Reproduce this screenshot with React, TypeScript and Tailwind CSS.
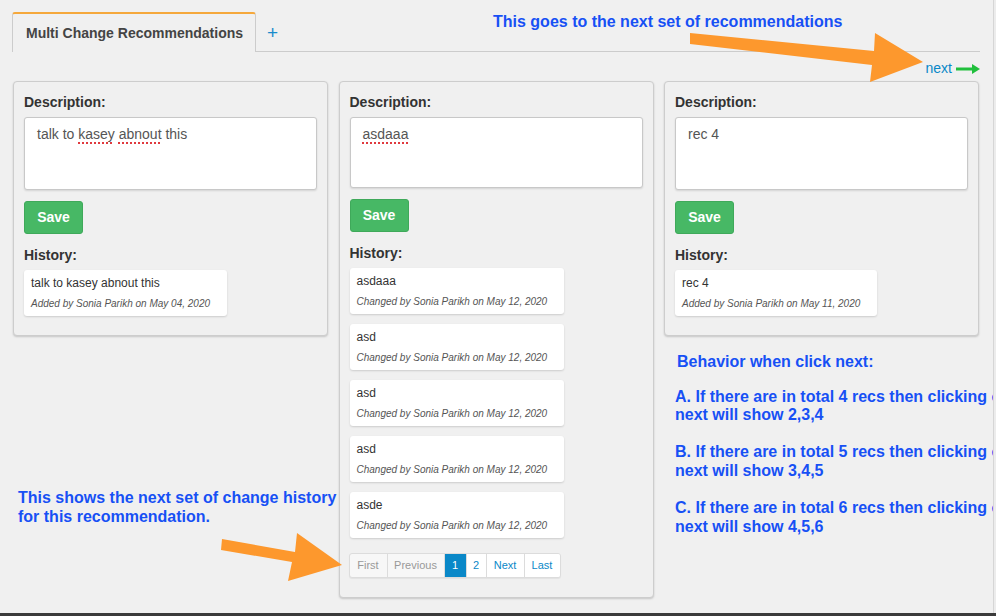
import * as React from "react";

interface Segment {
    text: string;
    typo?: boolean;
}

interface HistoryItem {
    text: string;
    meta: string;
}

interface Recommendation {
    description: Array<Segment>;
    boxHeight: string;
    history: Array<HistoryItem>;
    paged?: boolean;
}

const changed = (text: string): HistoryItem => ({ text, meta: "Changed by Sonia Parikh on May 12, 2020" });

const recs: Array<Recommendation> = [
    {
        description: [{ text: "talk to " }, { text: "kasey", typo: true }, { text: " " }, { text: "abnout", typo: true }, { text: " this" }],
        boxHeight: "h-[73px]",
        history: [{ text: "talk to kasey abnout this", meta: "Added by Sonia Parikh on May 04, 2020" }]
    },
    {
        description: [{ text: "asdaaa", typo: true }],
        boxHeight: "h-[71px]",
        history: [changed("asdaaa"), changed("asd"), changed("asd"), changed("asd"), changed("asde")],
        paged: true
    },
    {
        description: [{ text: "rec 4" }],
        boxHeight: "h-[73px]",
        history: [{ text: "rec 4", meta: "Added by Sonia Parikh on May 11, 2020" }]
    }
];

const pages = [
    { label: "First", w: "w-[37px]", tone: "text-[#999]" },
    { label: "Previous", w: "w-[57px]", tone: "text-[#999]" },
    { label: "1", w: "w-[22px]", tone: "text-white bg-[#0a88c8]" },
    { label: "2", w: "w-[20px]", tone: "text-[#0a88c8] bg-white" },
    { label: "Next", w: "w-[38px]", tone: "text-[#0a88c8] bg-white" },
    { label: "Last", w: "w-[36px]", tone: "text-[#0a88c8] bg-white" }
];

const Pagination = () => (
    <div className="mt-[15px] -ml-[1px] flex h-[25px] w-fit overflow-hidden rounded-[3px] border border-[#dcdcdc] bg-[#f7f7f7] shadow-[0_1px_1px_rgba(0,0,0,0.06)]">
        {pages.map((p, i) => (
            <div
                key={p.label}
                className={`${p.w} ${p.tone} ${i > 0 ? "border-l border-[#dcdcdc]" : ""} flex items-center justify-center text-[11px]`}
            >
                {p.label}
            </div>
        ))}
    </div>
);

const RecCard = ({ rec }: { rec: Recommendation }) => (
    <div className="w-[315px] rounded-[4px] border border-[#cdcdcd] bg-[#f0f0f0] px-[10px] pt-[10px] pb-[19px] shadow-[0_1px_2px_rgba(0,0,0,0.18)]">
        <div className="mb-[5px] text-[14px] font-bold leading-[20px] text-[#333]">Description:</div>
        <div
            className={`${rec.boxHeight} rounded-[3px] border border-[#c8c8c8] bg-white px-[12px] pt-[6px] text-[14px] leading-[20px] text-[#555] shadow-[0_1px_2px_rgba(0,0,0,0.12)]`}
        >
            {rec.description.map((s, i) => (
                <span
                    key={i}
                    className={s.typo ? "underline decoration-dotted decoration-[#e0393e] decoration-[1.5px] underline-offset-[3px]" : ""}
                >
                    {s.text}
                </span>
            ))}
        </div>
        <button className="mt-[11px] h-[33px] w-[59px] rounded-[3px] border border-[#3fa95a] bg-[#47b865] text-[14px] font-bold text-white">
            Save
        </button>
        <div className="mt-[11px] mb-[5px] text-[14px] font-bold leading-[20px] text-[#333]">History:</div>
        <div className="flex flex-col gap-[10px]">
            {rec.history.map((h, i) => (
                <div
                    key={i}
                    className="w-fit rounded-[3px] bg-white pl-[7px] pr-[17px] pt-[5px] pb-[5px] shadow-[0_1px_2px_rgba(0,0,0,0.15)]"
                >
                    <div className="text-[12px] leading-[16px] text-[#333]">{h.text}</div>
                    <div className="mt-[6px] text-[10px] italic leading-[14px] text-[#555]">{h.meta}</div>
                </div>
            ))}
        </div>
        {rec.paged && <Pagination />}
    </div>
);

const Note = ({ className, children }: { className: string; children: React.ReactNode }) => (
    <div className={`absolute whitespace-nowrap text-[16px] font-bold text-[#1750f5] ${className}`}>{children}</div>
);

export default function App() {
    return (
        <div
            className="relative h-[616px] w-[996px] overflow-hidden bg-[#f0f0f0]"
            style={{ fontFamily: '"Liberation Sans", Arial, sans-serif' }}
        >
            <div className="ml-[12px] w-[968px] pt-[12px]">
                {/* tabs */}
                <div className="flex h-[40px]">
                    <div className="flex w-[244px] items-center rounded-t-[3px] border-x border-t-2 border-[#cccccc] border-t-[#f5a83c] pl-[13px] text-[14px] font-bold text-[#444]">
                        Multi Change Recommendations
                    </div>
                    <div className="flex flex-1 items-center border-b border-[#cccccc] pl-[11px] pt-[1px] text-[19px] leading-none text-[#1a8ccc]">
                        +
                    </div>
                </div>

                <div className="flex h-[29px] items-center justify-end pt-[4px]">
                    <span className="text-[14px] text-[#0a88c8]">next</span>
                    <svg width="24" height="10" viewBox="0 0 24 10" className="ml-[4px]">
                        <rect x="0" y="3.5" width="17" height="3" fill="#20bf3c" />
                        <polygon points="16,0 24,5 16,10" fill="#20bf3c" />
                    </svg>
                </div>

                <div className="ml-[1px] flex items-start gap-[10.5px]">
                    {recs.map((r, i) => (
                        <RecCard key={i} rec={r} />
                    ))}
                </div>
            </div>

            {/* annotations */}
            <Note className="left-[493px] top-[12px] leading-[20px]">This goes to the next set of recommendations</Note>
            <Note className="left-[18px] top-[488px] leading-[19px]">
                This shows the next set of change history
                <br />
                for this recommendation.
            </Note>
            <Note className="left-[677px] top-[353px] leading-[18px]">Behavior when click next:</Note>
            <Note className="left-[675px] top-[388px] leading-[18px]">
                A. If there are in total 4 recs then clicking on
                <br />
                next will show 2,3,4
            </Note>
            <Note className="left-[675px] top-[442px] leading-[19px]">
                B. If there are in total 5 recs then clicking on
                <br />
                next will show 3,4,5
            </Note>
            <Note className="left-[675px] top-[498px] leading-[19px]">
                C. If there are in total 6 recs then clicking on
                <br />
                next will show 4,5,6
            </Note>

            <svg className="pointer-events-none absolute left-0 top-0" width="996" height="616" viewBox="0 0 996 616">
                <polygon
                    points="690,33 874,51 875,33 923,62 870,82 872,65 690,44"
                    fill="#fd982d"
                />
                <polygon
                    points="222,539 295,552 297,533 342,565 288,581 292,562 221,550"
                    fill="#fd982d"
                />
            </svg>

            <div className="absolute right-0 top-0 h-full w-[3px] border-l border-[#d6d6d6] bg-[#ececec]" />
            <div className="absolute bottom-0 left-0 h-[3px] w-full bg-[#3a3a3a]" />
        </div>
    );
}
